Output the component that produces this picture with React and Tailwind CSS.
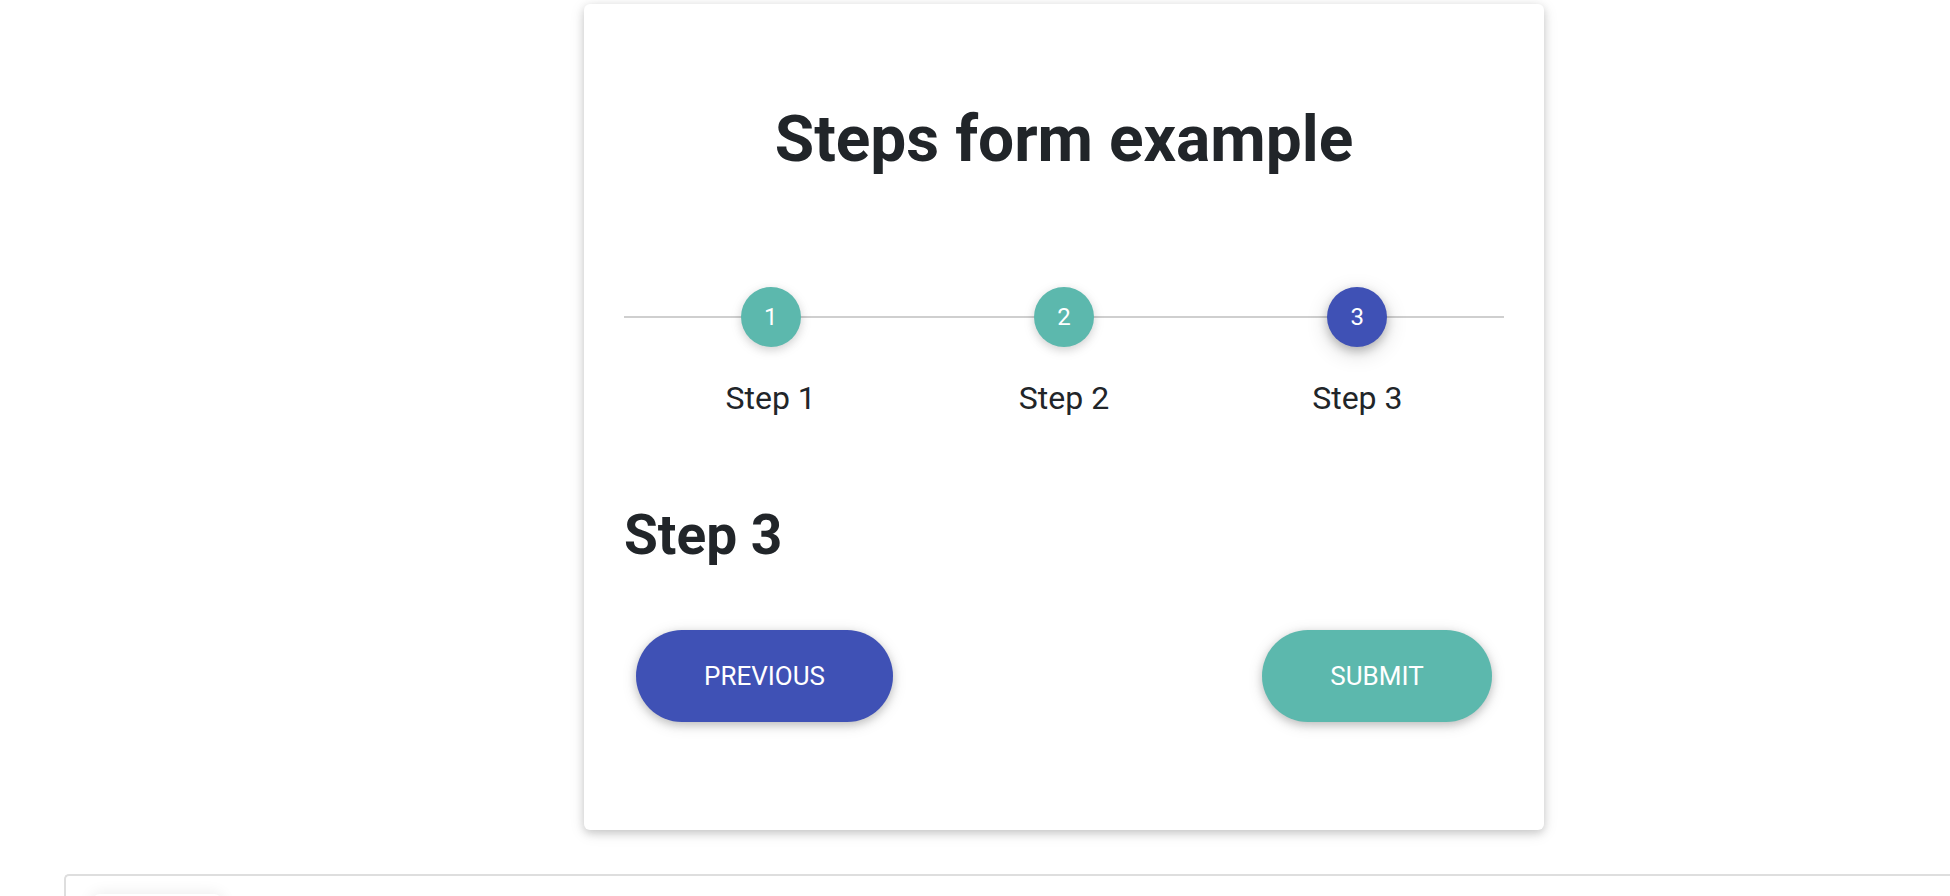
import React from "react";

const steps = [
  { n: 1, label: "Step 1", done: true },
  { n: 2, label: "Step 2", done: true },
  { n: 3, label: "Step 3", active: true },
];

function StepCircle({ step }) {
  const color = step.active
    ? "bg-[#3f51b5] shadow-[0_4px_10px_rgba(0,0,0,0.22),0_6px_22px_rgba(0,0,0,0.16)]"
    : "bg-[#5cb8ad] shadow-[0_3px_8px_rgba(0,0,0,0.12),0_3px_14px_rgba(0,0,0,0.08)]";
  return (
    <div className={`relative z-10 flex h-[60px] w-[60px] items-center justify-center rounded-full text-[24px] text-white ${color}`}>
      {step.n}
    </div>
  );
}

export default function App() {
  return (
    <div className="min-h-[900px] bg-white font-['Roboto',sans-serif] text-[#212529]">
      <div className="pl-[584px] pt-[4px]">
        <div className="w-[960px] rounded-[6px] bg-white px-10 pb-[108px] pt-[98px] shadow-[0_3px_8px_rgba(0,0,0,0.16),0_3px_16px_rgba(0,0,0,0.10)]">
          <h1 className="text-center text-[64px] font-bold leading-[1.2]">Steps form example</h1>

          <div className="relative mt-[108px]">
            <div className="absolute left-0 right-0 top-[29px] h-[2px] bg-[#cfcfcf]" />
            <div className="grid grid-cols-3">
              {steps.map((s) => (
                <div key={s.n} className="flex flex-col items-center">
                  <StepCircle step={s} />
                  <p className="mt-[27px] text-[32px] leading-[1.5]">{s.label}</p>
                </div>
              ))}
            </div>
          </div>

          <h2 className="mt-[80px] text-[55px] font-bold leading-[1.2]">Step 3</h2>

          <div className="mt-[62px] flex items-center justify-between px-3">
            <button className="flex h-[92px] w-[257px] items-center justify-center rounded-full bg-[#3f51b5] pt-[2px] text-[26px] uppercase text-white shadow-[0_3px_8px_rgba(0,0,0,0.18),0_3px_16px_rgba(0,0,0,0.12)]">
              Previous
            </button>
            <button className="flex h-[92px] w-[230px] items-center justify-center rounded-full bg-[#5cb8ad] pt-[2px] text-[26px] uppercase text-white shadow-[0_3px_8px_rgba(0,0,0,0.18),0_3px_16px_rgba(0,0,0,0.12)]">
              Submit
            </button>
          </div>
        </div>
      </div>

      <div className="ml-[64px] mt-[44px] h-[200px] rounded-tl-[5px] border-l-2 border-t-2 border-[#dedede] bg-white pl-[26px] pt-[18px]">
        <div className="h-[40px] w-[130px] rounded-[8px] bg-white shadow-[0_0_16px_rgba(0,0,0,0.09)]" />
      </div>
    </div>
  );
}
